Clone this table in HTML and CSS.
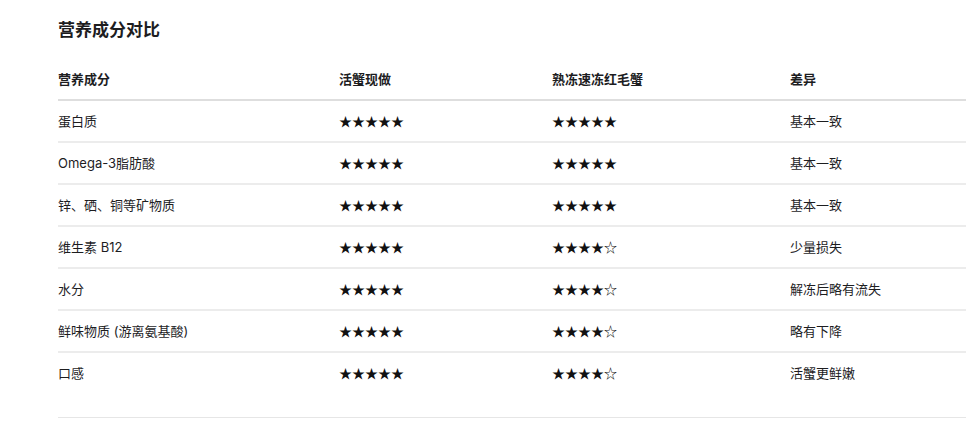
FILE: index.html
```html
<!DOCTYPE html>
<html lang="zh-CN">
<head>
<meta charset="utf-8">
<link rel="stylesheet" href="styles.css">
</head>
<body>
<section class="section">
  <h2 class="title">营养成分对比</h2>
  <table class="cmp">
    <colgroup>
      <col class="c1"><col class="c2"><col class="c3"><col class="c4">
    </colgroup>
    <thead>
      <tr><th>营养成分</th><th>活蟹现做</th><th>熟冻速冻红毛蟹</th><th>差异</th></tr>
    </thead>
    <tbody>
      <tr><td>蛋白质</td><td class="stars">★★★★★</td><td class="stars">★★★★★</td><td>基本一致</td></tr>
      <tr><td>Omega-3脂肪酸</td><td class="stars">★★★★★</td><td class="stars">★★★★★</td><td>基本一致</td></tr>
      <tr><td>锌、硒、铜等矿物质</td><td class="stars">★★★★★</td><td class="stars">★★★★★</td><td>基本一致</td></tr>
      <tr><td>维生素 B12</td><td class="stars">★★★★★</td><td class="stars">★★★★☆</td><td>少量损失</td></tr>
      <tr><td>水分</td><td class="stars">★★★★★</td><td class="stars">★★★★☆</td><td>解冻后略有流失</td></tr>
      <tr><td>鲜味物质 (游离氨基酸)</td><td class="stars">★★★★★</td><td class="stars">★★★★☆</td><td>略有下降</td></tr>
      <tr><td>口感</td><td class="stars">★★★★★</td><td class="stars">★★★★☆</td><td>活蟹更鲜嫩</td></tr>
    </tbody>
  </table>
  <div class="rule"></div>
</section>
</body>
</html>
```

FILE: styles.css
```css
html, body {
  margin: 0;
  padding: 0;
  background: #fff;
  overflow: hidden;
}
body {
  font-family: Inter, "Noto Sans CJK SC", sans-serif;
  color: #1d1d1f;
  font-size: 13px;
}
.section {
  padding: 18px 0 0 58px;
}
.title {
  margin: 0 0 17px;
  font-size: 17px;
  line-height: 24px;
  font-weight: 700;
}
.cmp {
  width: 908px;
  border-collapse: collapse;
  table-layout: fixed;
}
.c1 { width: 281px; }
.c2 { width: 213px; }
.c3 { width: 238px; }
.c4 { width: 176px; }
.cmp th, .cmp td {
  padding: 10px 0;
  line-height: 20px;
  text-align: left;
  font-size: 13px;
}
.cmp th {
  font-weight: 600;
  border-bottom: 2px solid #dedede;
}
.cmp tbody tr td {
  border-bottom: 2px solid #ececec;
}
.cmp tbody tr:last-child td {
  border-bottom: none;
}
.stars {
  font-family: "Noto Sans CJK SC", sans-serif;
  color: #111;
}
.rule {
  margin-top: 24px;
  height: 1px;
  background: #e6e6e6;
}
```
